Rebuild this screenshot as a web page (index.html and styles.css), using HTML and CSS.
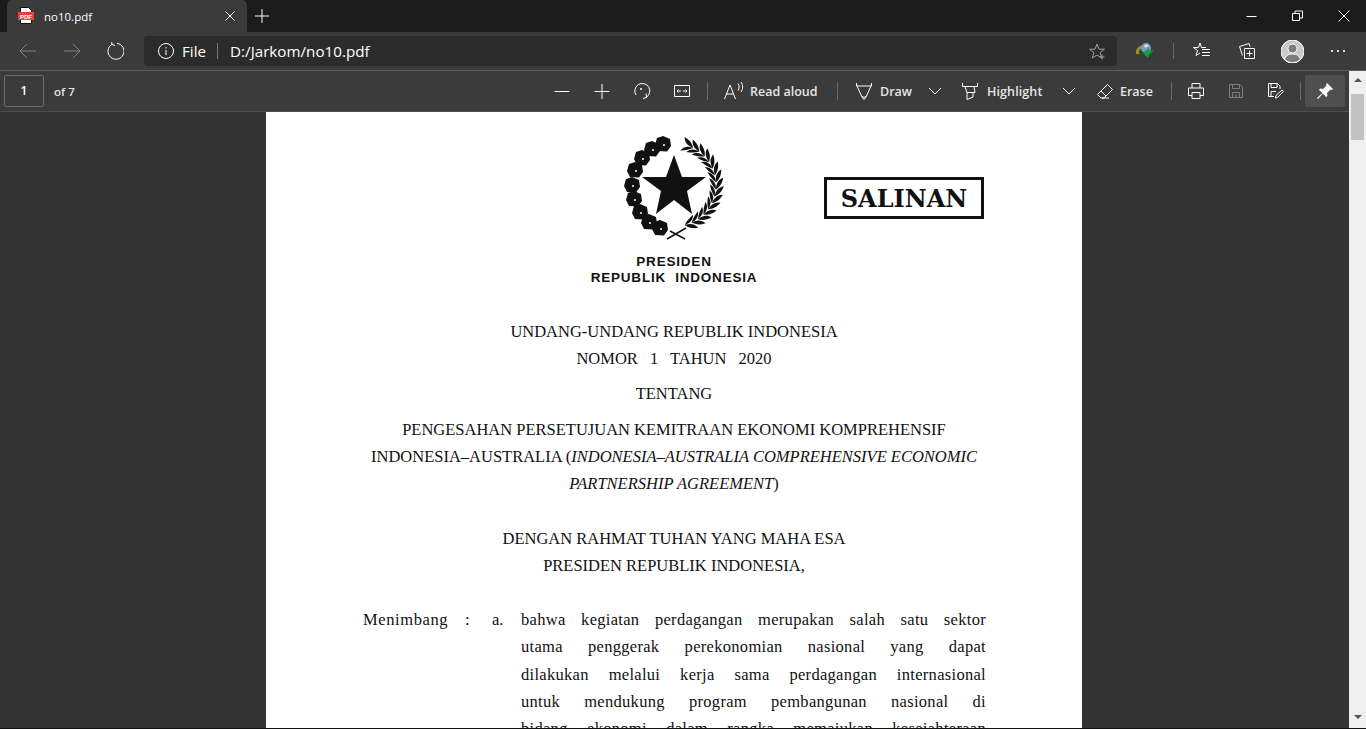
FILE: index.html
```html
<!DOCTYPE html>
<html lang="en">
<head>
    <meta charset="UTF-8">
    <title>no10.pdf</title>
    <link rel="stylesheet" href="styles.css">
</head>
<body>
    <div class="tabstrip">
        <div class="tab">
            <svg class="favicon" width="16" height="18" viewBox="0 0 16 18">
                <path d="M2.5 .5h8l3 3v13h-11z" fill="#fff" stroke="#111"/>
                <rect x="0" y="5" width="16" height="8" fill="#ee3f3f"/>
                <text x="8" y="11.5" class="favicon-text">PDF</text>
            </svg>
            <span class="tab-title">no10.pdf</span>
            <svg class="tab-close" width="12" height="12" viewBox="0 0 12 12"><path d="M1.5 1.5l9 9M10.500 1.500l-9 9"/></svg>
        </div>
        <svg class="new-tab" width="14" height="14" viewBox="0 0 14 14"><path d="M7 0v14M0 7h14"/></svg>
        <div class="window-controls">
            <svg width="12" height="12" viewBox="0 0 12 12"><path d="M.5 6.500h10"/></svg>
            <svg width="12" height="12" viewBox="0 0 12 12"><path d="M.5 3.500h7v7h-7zM3 3.500v-2.500h7.500v7h-3"/></svg>
            <svg width="12" height="12" viewBox="0 0 12 12"><path d="M.5 .5l11 11M11.500 .5l-11 11"/></svg>
        </div>
    </div>

    <div class="navbar">
        <svg class="nav-btn dim" width="18" height="16" viewBox="0 0 18 16"><path d="M1 8h16M8 1L1 8l7 7"/></svg>
        <svg class="nav-btn dim" width="18" height="16" viewBox="0 0 18 16"><path d="M1 8h16M10 1l7 7-7 7"/></svg>
        <svg class="nav-btn reload" width="18" height="18" viewBox="0 0 18 18"><path d="M6 2.300A8 8 0 1 0 11 1.300M5.500 -.5L6.200 2.500 9 3.500"/></svg>
        <div class="address">
            <svg class="info" width="16" height="16" viewBox="0 0 16 16"><circle cx="8" cy="8" r="7.500"/><path d="M8 7v5M8 4v1.500"/></svg>
            <span class="scheme">File</span>
            <span class="address-sep"></span>
            <span class="url">D:/Jarkom/no10.pdf</span>
            <svg class="star" width="17" height="17" viewBox="0 0 17 17"><path d="M8 1l2 5.200h5.500l-4.400 3.400 1.600 5.400L8 12l-4.700 3 1.600-5.400L.5 6.200H6zM13 11.500v5M10.500 14h5"/></svg>
        </div>
        <svg class="idm" width="18" height="16" viewBox="0 0 18 16">
            <path d="M6 4a5 5 0 0 0-4 7" class="idm-orange"/>
            <path d="M4 5a4 4 0 0 0-1 6" class="idm-rainbow"/>
            <circle cx="10" cy="5" r="5" fill="#6a9fd4"/>
            <path d="M8 2a3 2 0 0 1 5 1l-4 2z" fill="#e6e2a8"/>
            <path d="M18 7l-5 1V5l-6 5 5 5 1-3z" fill="#15a02e"/>
        </svg>
        <span class="nav-sep"></span>
        <svg class="fav-list" width="18" height="18" viewBox="0 0 18 18"><path d="M7 1l1.500 4.500H13M7 1L5.500 5.500H.5l4 3-1.500 5 4-2.500M9 7.500h8M9 10.500h8M9 13.500h8"/></svg>
        <svg class="collections" width="16" height="17" viewBox="0 0 16 17"><path d="M5.500 5.500h10v10h-10zM10.500 7.500v6M7.500 10.500h6M3.500 12.500L.5 3.500 10 .5l1 3"/></svg>
        <svg class="avatar" width="23" height="23" viewBox="0 0 23 23">
            <circle cx="11.500" cy="11.500" r="11.500" fill="#c9c9c9"/>
            <circle cx="11.500" cy="8.500" r="4.500" fill="#7d7d7d"/>
            <path d="M3.500 19.500c1-4 4-5.500 8-5.500s7 1.500 8 5.500a11.500 11.500 0 0 1-16 0z" fill="#7d7d7d"/>
        </svg>
        <div class="more"><span></span><span></span><span></span></div>
    </div>

    <div class="workspace">
        <div class="viewer">
            <div class="pdf-toolbar">
                <div class="page-input">1</div>
                <span class="page-count">of 7</span>
                <div class="tools">
                    <button class="tool"><svg width="16" height="16" viewBox="0 0 16 16"><path d="M.5 8.500h15"/></svg></button>
                    <button class="tool"><svg width="16" height="16" viewBox="0 0 16 16"><path d="M.5 8.500h15M8 1v15"/></svg></button>
                    <button class="tool"><svg width="18" height="18" viewBox="0 0 18 18"><path d="M3 13A7.500 7.500 0 1 1 13 15.500M10 16.500l3.500-1-.5-4"/><circle cx="8" cy="7" r="1" fill="#fff" stroke="none"/></svg></button>
                    <button class="tool"><svg width="16" height="12" viewBox="0 0 16 12"><path d="M.5 .5h15v11h-15zM3 6h4M3 6l1.500-1.500M3 6l1.500 1.500M9 6h4M13 6l-1.500-1.500M13 6l-1.500 1.500"/></svg></button>
                    <span class="tool-sep first-sep"></span>
                    <button class="tool tool-read"><svg width="20" height="18" viewBox="0 0 20 18"><path d="M.5 17L6 3l5.500 14M2.500 12h7M14 1.500c1.500 2 1.500 5 0 7M17 0c2.200 3 2.200 7 0 10"/></svg><span>Read aloud</span></button>
                    <span class="tool-sep"></span>
                    <button class="tool tool-draw"><svg width="16" height="17" viewBox="0 0 16 17"><path d="M.5 0v3h15V0M1 3l5 11h4l5-11M6 14l2 2.500 2-2.500"/></svg><span>Draw</span></button>
                    <button class="tool tool-chevron"><svg width="14" height="8" viewBox="0 0 14 8"><path d="M1 1l6 6 6-6"/></svg></button>
                    <button class="tool tool-highlight"><svg width="16" height="17" viewBox="0 0 16 17"><path d="M.5 0v3.500h15V0M3 3.500l2 6h8l-1-6M5 9.500v7l6-2.500V9.500"/></svg><span>Highlight</span></button>
                    <button class="tool tool-chevron"><svg width="14" height="8" viewBox="0 0 14 8"><path d="M1 1l6 6 6-6"/></svg></button>
                    <button class="tool tool-erase"><svg width="16" height="15" viewBox="0 0 16 15"><path d="M10.500 .5l5 5-8.500 8.500H4L.5 10.500zM4 7l5 5M5 14h7"/></svg><span>Erase</span></button>
                    <span class="tool-sep"></span>
                    <button class="tool print"><svg width="16" height="16" viewBox="0 0 16 16"><path d="M4 5V.5h8V5M4 12.500H.5V5h15v7.500H12M4 9.500h8v6H4z"/></svg></button>
                    <button class="tool dim"><svg width="14" height="14" viewBox="0 0 14 14"><path d="M.5 .5h10.500l2.500 2.500v10.500H.5zM3.500 .5v4h7v-4M3.500 13.500v-5h7v5M7 10v3.500"/></svg></button>
                    <button class="tool"><svg width="16" height="16" viewBox="0 0 16 16"><path d="M6 13.500H.5V.5h9l2.500 2.500V6M3 .5v4h6V.5M3 13.500V8.500h5M7.500 15l.5-2.500 6-5.500 1.500 1.500-6 6z"/></svg></button>
                    <span class="tool-sep pin-sep"></span>
                    <button class="tool pin"><svg width="16" height="16" viewBox="0 0 16 16"><path d="M10 0l6 6-1.500 1-1-.5L10 10l.5 3-1.500 1-3-3.500L1 16l-1-1 5.500-5L2 7l1-1.500 3 .5 3.500-3.500L9 1.500z" class="pin-shape"/></svg></button>
                </div>
            </div>

            <main class="pdf-area">
                <article class="page">
                    <header class="doc-head">
                        <div class="doc-emblem">
                            <svg width="110" height="110" viewBox="0 0 110 110">
                                <defs>
                                    <g id="flower">
                                        <polygon points="0,-8 7,-5 8,2 4,7.500 -5,7 -8,1 -6,-6" fill="#111"/>
                                        <circle cx="1" cy="1" r="1" fill="#fff"/>
                                    </g>
                                    <g id="grain">
                                        <path d="M41 3C45 0 47-3 48-9 43-7 41-3 41 3Z" fill="#111"/>
                                        <path d="M41 3C38 0 36-3 34-8 39-6 41-3 41 3Z" fill="#111"/>
                                    </g>
                                </defs>
                                <polygon points="54,23 62,45 86,45 67,59 72,82 54,68 36,82 41,59 22,45 46,45" fill="#111"/>
                                <use href="#flower" x="43" y="12"/>
                                <use href="#flower" x="32" y="17"/>
                                <use href="#flower" x="22" y="26"/>
                                <use href="#flower" x="15" y="38"/>
                                <use href="#flower" x="12" y="53"/>
                                <use href="#flower" x="14" y="67"/>
                                <use href="#flower" x="20" y="80"/>
                                <use href="#flower" x="29" y="90"/>
                                <use href="#flower" x="40" y="96"/>
                                <g transform="translate(55 53)">
                                    <use href="#grain" transform="rotate(-68)"/>
                                    <use href="#grain" transform="rotate(-58)"/>
                                    <use href="#grain" transform="rotate(-48)"/>
                                    <use href="#grain" transform="rotate(-38)"/>
                                    <use href="#grain" transform="rotate(-28)"/>
                                    <use href="#grain" transform="rotate(-18)"/>
                                    <use href="#grain" transform="rotate(-8)"/>
                                    <use href="#grain" transform="rotate(2)"/>
                                    <use href="#grain" transform="rotate(12)"/>
                                    <use href="#grain" transform="rotate(22)"/>
                                    <use href="#grain" transform="rotate(32)"/>
                                    <use href="#grain" transform="rotate(42)"/>
                                    <use href="#grain" transform="rotate(52)"/>
                                    <use href="#grain" transform="rotate(62)"/>
                                    <use href="#grain" transform="rotate(72)"/>
                                </g>
                                <path d="M47 107L66 96M50 99L65 107" class="emblem-line"/>
                            </svg>
                            <div class="emblem-text">PRESIDEN<br>REPUBLIK&nbsp; INDONESIA</div>
                        </div>
                        <div class="salinan">SALINAN</div>
                    </header>

                    <div class="doc-title">
                        <p>UNDANG-UNDANG REPUBLIK INDONESIA</p>
                        <p class="number">NOMOR 1 TAHUN 2020</p>
                        <p class="about">TENTANG</p>
                        <p class="subject">PENGESAHAN PERSETUJUAN KEMITRAAN EKONOMI KOMPREHENSIF</p>
                        <p>INDONESIA–AUSTRALIA (<i>INDONESIA–AUSTRALIA COMPREHENSIVE ECONOMIC</i></p>
                        <p><i>PARTNERSHIP AGREEMENT</i>)</p>
                        <p class="blessing">DENGAN RAHMAT TUHAN YANG MAHA ESA</p>
                        <p>PRESIDEN REPUBLIK INDONESIA,</p>
                    </div>

                    <div class="clause">
                        <span class="clause-label">Menimbang</span>
                        <span class="clause-colon">:</span>
                        <span class="clause-mark">a.</span>
                        <div class="clause-text">
                            <p>bahwa kegiatan perdagangan merupakan salah satu sektor</p>
                            <p>utama penggerak perekonomian nasional yang dapat</p>
                            <p>dilakukan melalui kerja sama perdagangan internasional</p>
                            <p>untuk mendukung program pembangunan nasional di</p>
                            <p>bidang ekonomi dalam rangka memajukan kesejahteraan</p>
                        </div>
                    </div>
                </article>
            </main>
        </div>

        <div class="scrollbar">
            <span class="arrow-up"></span>
            <span class="thumb"></span>
            <span class="arrow-down"></span>
        </div>
    </div>
    <div class="bottom-edge"></div>
</body>
</html>
```

FILE: styles.css
```css
* {
    box-sizing: border-box;
}

html,
body {
    height: 729px;
    margin: 0;
    overflow: hidden;
}

body {
    background-color: #333;
    color: #fff;
    font-family: "Open Sans", "Noto Sans", sans-serif;
}

svg {
    display: block;
    flex: none;
    fill: none;
    stroke: #fff;
}

/* tab strip */
.tabstrip {
    display: flex;
    align-items: center;
    height: 32px;
    padding-left: 7px;
    background-color: #1b1b1b;
}

.tab {
    display: flex;
    align-items: center;
    width: 240px;
    height: 32px;
    padding-left: 11px;
    border-radius: 5px 5px 0 0;
    background-color: #3b3b3b;
}

.favicon {
    stroke: none;
}

.favicon-text {
    fill: #fff;
    stroke: none;
    font-family: "Liberation Sans", sans-serif;
    font-size: 6px;
    font-weight: 700;
    text-anchor: middle;
}

.tab-title {
    width: 174px;
    margin-left: 10px;
    font-size: 11.500px;
}

.tab-close {
    margin-left: 6px;
}

.new-tab {
    margin-left: 8px;
}

.window-controls {
    display: flex;
    gap: 34px;
    margin-left: auto;
    padding-right: 16px;
}

/* address bar */
.navbar {
    display: flex;
    align-items: center;
    height: 39px;
    padding-left: 19px;
    border-bottom: 1px solid #5c5c5c;
    background-color: #3b3b3b;
}

.nav-btn {
    margin-right: 26px;
}

.nav-btn.dim {
    opacity: .35;
}

.reload {
    margin-left: -1px;
}

.address {
    display: flex;
    align-items: center;
    width: 973px;
    height: 30px;
    margin-left: -6px;
    padding-left: 14px;
    border-radius: 4px;
    background-color: #2b2b2b;
}

.scheme {
    margin-left: 8px;
    font-size: 15.200px;
}

.address-sep {
    width: 1px;
    height: 16px;
    margin: 0 12px 0 11px;
    background-color: #777;
}

.url {
    font-size: 15.200px;
}

.star {
    margin-left: auto;
    margin-right: 11px;
    opacity: .55;
}

.idm {
    margin-left: 19px;
    stroke: none;
}

.idm-orange {
    stroke: #e8771a;
    stroke-width: 3;
}

.idm-rainbow {
    stroke: #3bb03b;
    stroke-width: 1.500;
}

.nav-sep {
    width: 1px;
    height: 16px;
    margin-left: 19px;
    background-color: #666;
}

.fav-list {
    margin-left: 19px;
}

.collections {
    margin-left: 28px;
}

.avatar {
    margin-left: 26px;
}

.more {
    display: flex;
    gap: 4px;
    margin-left: 27px;
}

.more span {
    width: 2px;
    height: 2px;
    background-color: #ddd;
}

/* viewer */
.workspace {
    display: flex;
    height: 657px;
}

.viewer {
    display: flex;
    flex-direction: column;
    width: 1349px;
}

.pdf-toolbar {
    display: flex;
    flex: none;
    align-items: center;
    height: 41px;
    padding: 0 4px;
    border-bottom: 1px solid #4d4d4d;
    background-color: #3b3b3b;
}

.page-input {
    width: 40px;
    height: 32px;
    border: 1px solid #6e6e6e;
    border-radius: 2px;
    font-size: 12px;
    font-weight: 600;
    line-height: 30px;
    text-align: center;
}

.page-count {
    margin-left: 10px;
    color: #e4e4e4;
    font-size: 11.500px;
    font-weight: 600;
}

.tools {
    display: flex;
    align-items: center;
    margin-left: auto;
}

.tool {
    display: flex;
    flex: none;
    align-items: center;
    justify-content: center;
    width: 40px;
    height: 32px;
    padding: 0;
    border: 0;
    background: none;
    color: #e6e6e6;
    font-family: inherit;
    font-size: 12.500px;
    font-weight: 600;
}

.tool.dim svg {
    opacity: .35;
}

.tool-sep {
    flex: none;
    width: 1px;
    height: 18px;
    background-color: #6a6a6a;
}

.first-sep {
    margin-left: 5px;
}

.tool-read,
.tool-draw,
.tool-highlight,
.tool-erase {
    justify-content: flex-start;
}

.tool-read {
    width: 129px;
    padding-left: 16px;
}

.tool-read span {
    margin-left: 6px;
}

.tool-draw {
    width: 82px;
    padding-left: 18px;
}

.tool-draw span {
    margin-left: 8px;
}

.tool-chevron {
    width: 30px;
}

.tool-highlight {
    width: 104px;
    padding-left: 12px;
}

.tool-highlight span {
    margin-left: 9px;
    letter-spacing: .1px;
}

.tool-erase {
    width: 87px;
    padding-left: 13px;
}

.tool-erase span {
    margin-left: 7px;
}

.print {
    margin-left: 4px;
}

.pin-sep {
    margin-left: 4px;
}

.pin {
    margin-left: 4px;
    border-radius: 2px;
    background-color: #4f4f4f;
}

.pin-shape {
    fill: #fff;
    stroke: none;
}

/* pdf page */
.pdf-area {
    flex: 1;
    overflow: hidden;
    background-color: #333;
}

.page {
    width: 816px;
    min-height: 640px;
    margin-left: 266px;
    background-color: #fff;
    color: #111;
    font-family: "Liberation Serif", serif;
    font-size: 16.500px;
    line-height: 27px;
}

.page p {
    margin: 0;
}

.doc-head {
    display: flex;
    padding: 20px 0 0 324px;
}

.doc-emblem {
    width: 168px;
}

.doc-emblem svg {
    margin-left: 30px;
    stroke: none;
}

.emblem-line {
    stroke: #111;
    stroke-width: 1.500;
}

.emblem-text {
    margin-top: 12px;
    font-family: "Liberation Sans", sans-serif;
    font-size: 13.500px;
    font-weight: 700;
    letter-spacing: .8px;
    line-height: 16px;
    text-align: center;
    white-space: nowrap;
}

.salinan {
    width: 160px;
    height: 42px;
    margin: 45px 0 0 66px;
    border: 3px solid #111;
    font-family: "DejaVu Serif", serif;
    font-size: 24px;
    font-weight: 700;
    line-height: 37px;
    text-align: center;
}

.doc-title {
    margin-top: 32px;
    text-align: center;
    white-space: nowrap;
}

.number {
    word-spacing: 8px;
}

.about {
    margin-top: 8px !important;
}

.subject {
    margin-top: 9px !important;
}

.blessing {
    margin-top: 28px !important;
}

.clause {
    display: grid;
    grid-template-columns: 102px 27px 29px 465px;
    margin-top: 27px;
    padding-left: 97px;
}

.clause-label {
    letter-spacing: .6px;
}

.clause-text p {
    letter-spacing: .3px;
    line-height: 27.300px;
    text-align: justify;
    text-align-last: justify;
    white-space: nowrap;
}

/* scrollbar */
.scrollbar {
    position: relative;
    width: 17px;
    background-color: #f0f0f0;
}

.thumb {
    position: absolute;
    top: 23px;
    left: 2px;
    width: 13px;
    height: 46px;
    background-color: #c2c2c2;
}

.arrow-up,
.arrow-down {
    position: absolute;
    left: 5px;
    width: 0;
    height: 0;
    border-right: 4px solid transparent;
    border-left: 4px solid transparent;
}

.arrow-up {
    top: 7px;
    border-bottom: 4px solid #555;
}

.arrow-down {
    bottom: 9px;
    border-top: 4px solid #555;
}

.bottom-edge {
    height: 1px;
    background-color: #111;
}
```
